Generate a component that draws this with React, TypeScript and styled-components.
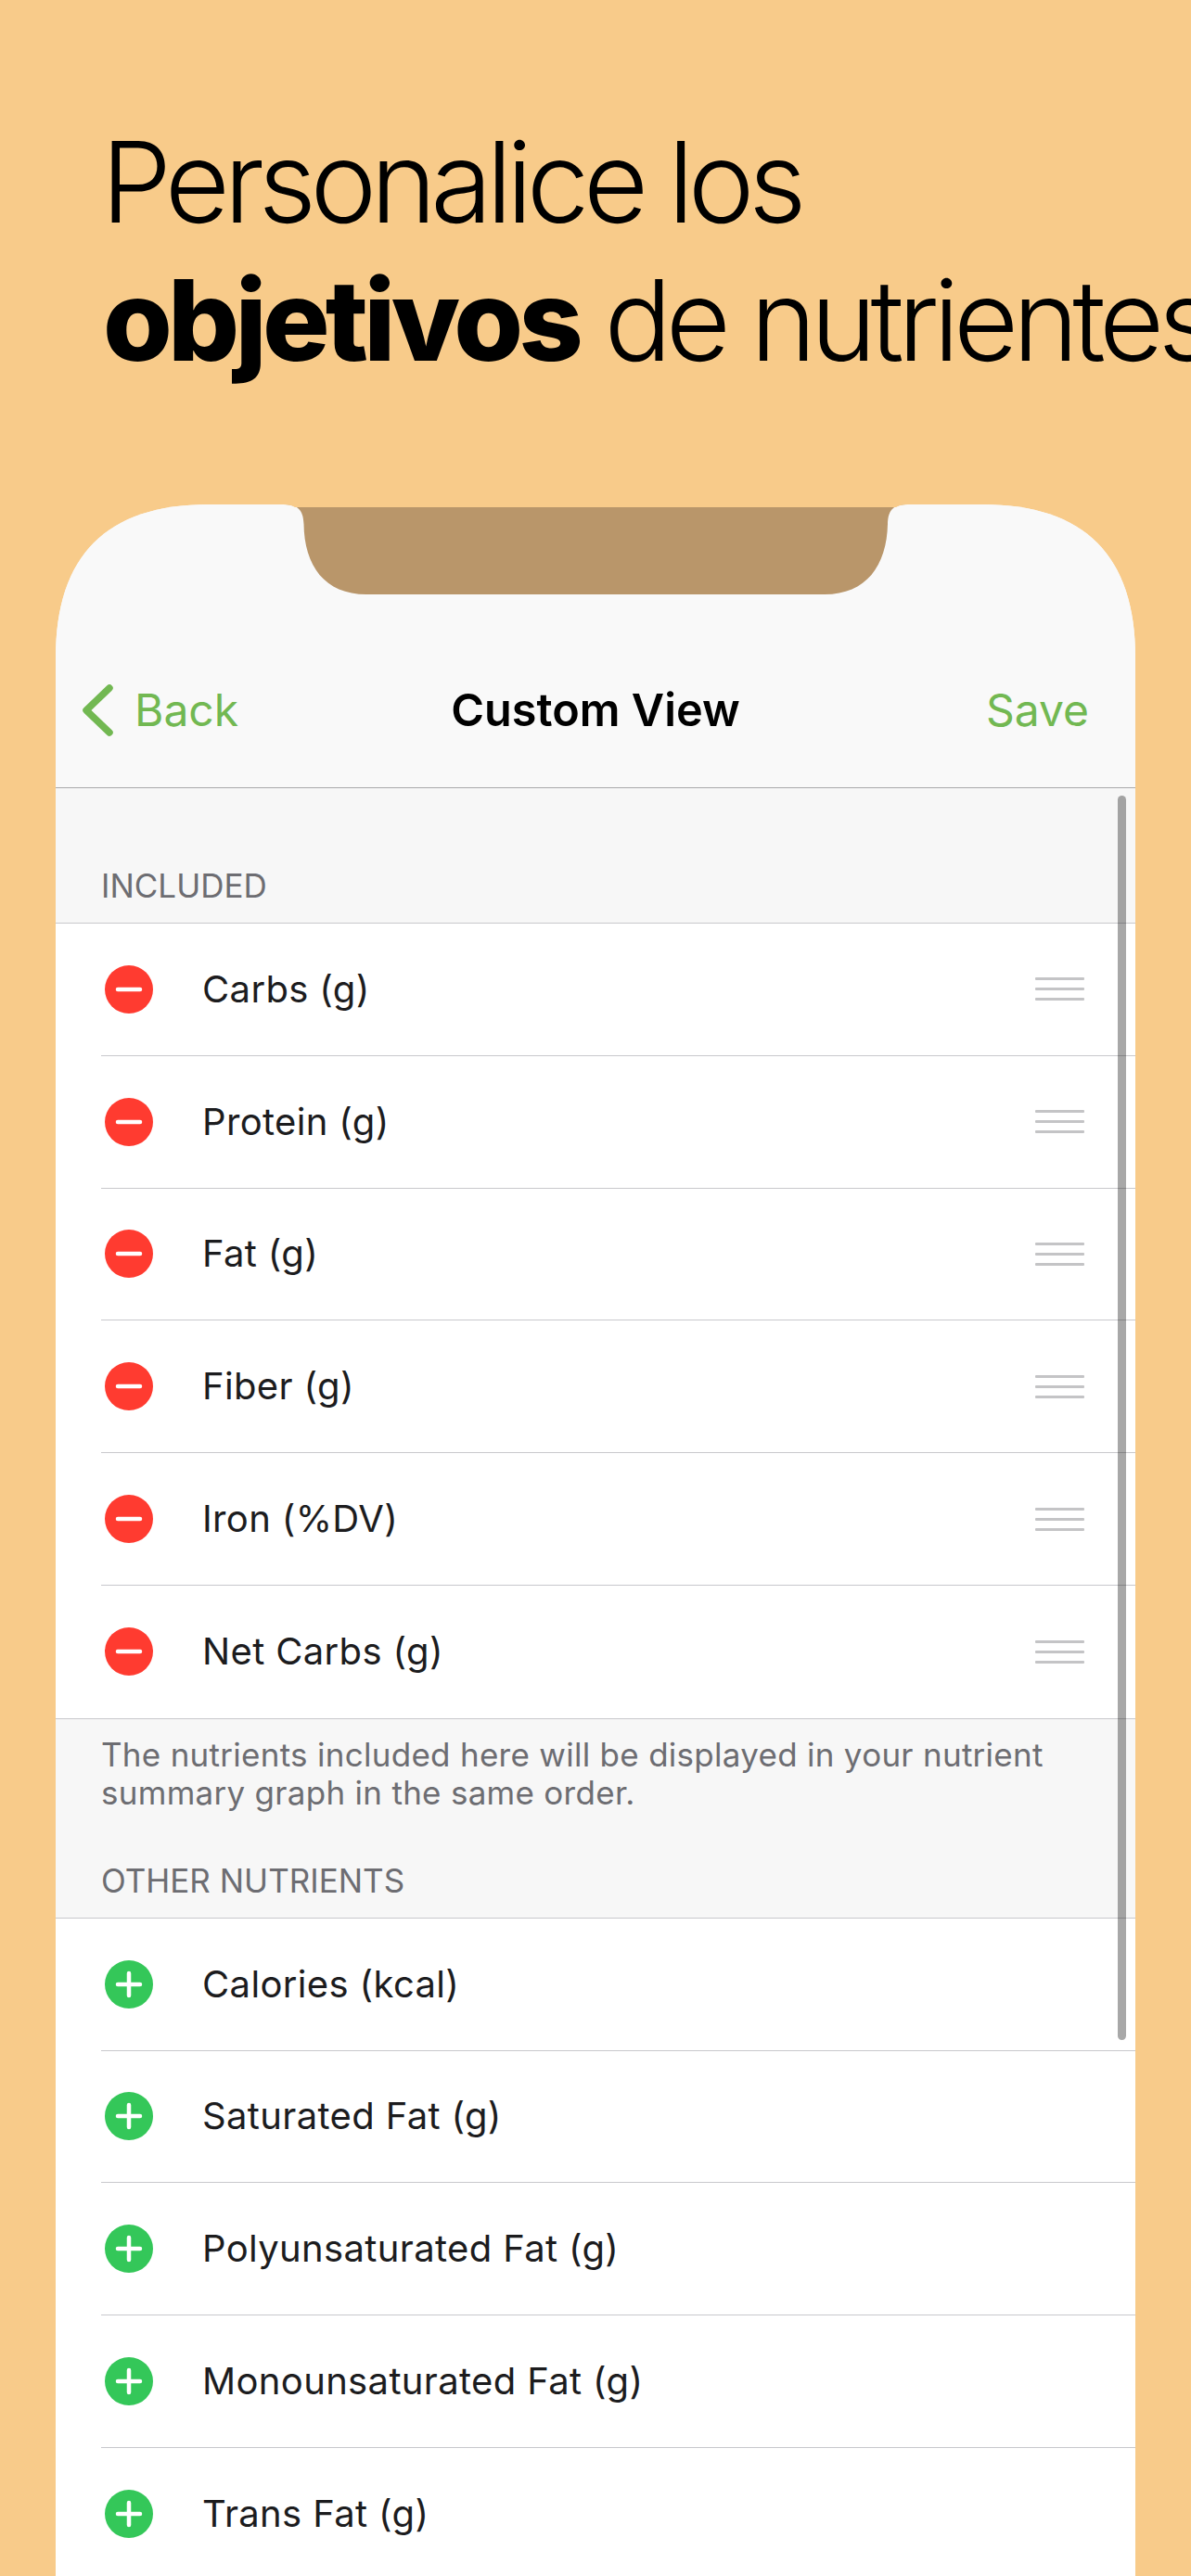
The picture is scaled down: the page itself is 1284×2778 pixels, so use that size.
import React from "react";
import styled, { createGlobalStyle } from "styled-components";

const GlobalStyle = createGlobalStyle`
	html, body {
		margin: 0;
		padding: 0;
		background: #f8cb8a;
	}
`;

const Page = styled.div`
	width: 1284px;
	height: 2778px;
	overflow: hidden;
	background: #f8cb8a;
	font-family: "Inter", "Liberation Sans", sans-serif;
`;

const Headline = styled.h1`
	margin: 0;
	height: 544px;
	box-sizing: border-box;
	padding: 122px 0 0 109px;
	font-size: 121px;
	line-height: 149px;
	font-weight: 300;
	letter-spacing: -6.5px;
	white-space: nowrap;
	color: #000;
	b {
		margin-left: 2px;
		font-weight: 800;
		letter-spacing: -4.8px;
	}
`;

const Phone = styled.div`
	position: relative;
	width: 1164px;
	height: 2234px;
	margin-left: 60px;
	overflow: hidden;
	background: #f7f7f7;
	clip-path: path("M0 2234L0 165C0 55 55 0 165 0L999 0C1109 0 1164 55 1164 165L1164 2234Z");
`;

const Notch = styled.svg`
	position: absolute;
	top: 0;
	left: 245px;
`;

const Nav = styled.div`
	height: 305px;
	padding: 0 28px;
	display: grid;
	grid-template-columns: 1fr auto 1fr;
	align-items: end;
	background: #f9f9f9;
	border-bottom: 1px solid #a9a9ab;
`;

const NavText = styled.div`
	height: 113px;
	font-size: 48px;
	line-height: 60px;
`;

const BackLink = styled(NavText)`
	display: flex;
	align-items: flex-start;
	gap: 23px;
	color: #72b852;
	svg {
		margin-top: 2px;
	}
`;

const Title = styled(NavText)`
	color: #000;
	font-weight: 600;
	font-size: 48.6px;
`;

const SaveLink = styled(NavText)`
	padding-right: 22px;
	text-align: right;
	color: #72b852;
`;

const SectionLabel = styled.div<{ $height: number }>`
	height: ${(p) => p.$height}px;
	box-sizing: border-box;
	display: flex;
	align-items: flex-end;
	padding: 0 0 19px 49px;
	font-size: 35px;
	line-height: 42px;
	color: #6d6d72;
`;

const List = styled.div`
	background: #fff;
	border-top: 1px solid #c8c8cc;
	border-bottom: 1px solid #c8c8cc;
`;

const Row = styled.div`
	padding-left: 49px;
`;

const RowBody = styled.div<{ $last: boolean }>`
	height: 142.8px;
	box-sizing: border-box;
	display: flex;
	align-items: center;
	padding-right: 55px;
	border-bottom: ${(p) => (p.$last ? "none" : "1px solid #c8c8cc")};
`;

const RoundIcon = styled.svg`
	flex: none;
	margin-left: 4px;
`;

const RowLabel = styled.div`
	flex: 1;
	margin-left: 53px;
	font-size: 40px;
	line-height: 48px;
	letter-spacing: 0.35px;
	color: #1c1c1e;
`;

const Handle = styled.div`
	flex: none;
	width: 53px;
	height: 25px;
	display: flex;
	flex-direction: column;
	justify-content: space-between;
	span {
		display: block;
		height: 3px;
		border-radius: 1px;
		background: #c4c4c6;
	}
`;

const Footer = styled.div`
	padding: 18px 90px 0 49px;
	font-size: 35px;
	line-height: 41px;
	letter-spacing: 0.28px;
	color: #6d6d72;
`;

const ScrollBar = styled.div`
	position: absolute;
	top: 314px;
	right: 10px;
	width: 9px;
	height: 1342px;
	border-radius: 5px;
	background: rgba(0, 0, 0, 0.34);
`;

const included = ["Carbs (g)", "Protein (g)", "Fat (g)", "Fiber (g)", "Iron (%DV)", "Net Carbs (g)"];
const others = [
	"Calories (kcal)",
	"Saturated Fat (g)",
	"Polyunsaturated Fat (g)",
	"Monounsaturated Fat (g)",
	"Trans Fat (g)",
];

const ActionIcon = ({ add }: { add: boolean }) => (
	<RoundIcon width="52" height="52" viewBox="0 0 52 52">
		<circle cx="26" cy="26" r="26" fill={add ? "#34c759" : "#ff3b30"} />
		<path d={add ? "M14 26H38M26 14V38" : "M14 26H38"} stroke="#fff" strokeWidth="4.5" strokeLinecap="round" />
	</RoundIcon>
);

const App = () => {
	return (
		<Page>
			<GlobalStyle />
			<Headline>
				Personalice los
				<br />
				<b>objetivos</b> de nutrientes
			</Headline>
			<Phone>
				<Nav>
					<BackLink>
						<svg width="34" height="56" viewBox="0 0 34 56">
							<path d="M30 4L5 28L30 52" fill="none" stroke="#72b852" strokeWidth="7.5" strokeLinecap="round" strokeLinejoin="round" />
						</svg>
						Back
					</BackLink>
					<Title>Custom View</Title>
					<SaveLink>Save</SaveLink>
				</Nav>
				<SectionLabel $height={145}>INCLUDED</SectionLabel>
				<List>
					{included.map((name, i) => (
						<Row key={name}>
							<RowBody $last={i === included.length - 1}>
								<ActionIcon add={false} />
								<RowLabel>{name}</RowLabel>
								<Handle>
									<span />
									<span />
									<span />
								</Handle>
							</RowBody>
						</Row>
					))}
				</List>
				<Footer>
					The nutrients included here will be displayed in your nutrient
					<br />
					summary graph in the same order.
				</Footer>
				<SectionLabel $height={114}>OTHER NUTRIENTS</SectionLabel>
				<List>
					{others.map((name) => (
						<Row key={name}>
							<RowBody $last={false}>
								<ActionIcon add />
								<RowLabel>{name}</RowLabel>
							</RowBody>
						</Row>
					))}
				</List>
				<Notch width="674" height="100" viewBox="0 0 674 100">
					<path d="M0 0C15 0 22 5 22.500 21C23 66 45 97 90 97L584 97C629 97 651 66 652 21C652.500 5 659 0 674 0Z" fill="#b9966a" />
					<path d="M0 0C6 0 10 1 13 3L661 3C664 1 668 0 674 0Z" fill="#f8cb8a" />
				</Notch>
				<ScrollBar />
			</Phone>
		</Page>
	);
};

export default App;
